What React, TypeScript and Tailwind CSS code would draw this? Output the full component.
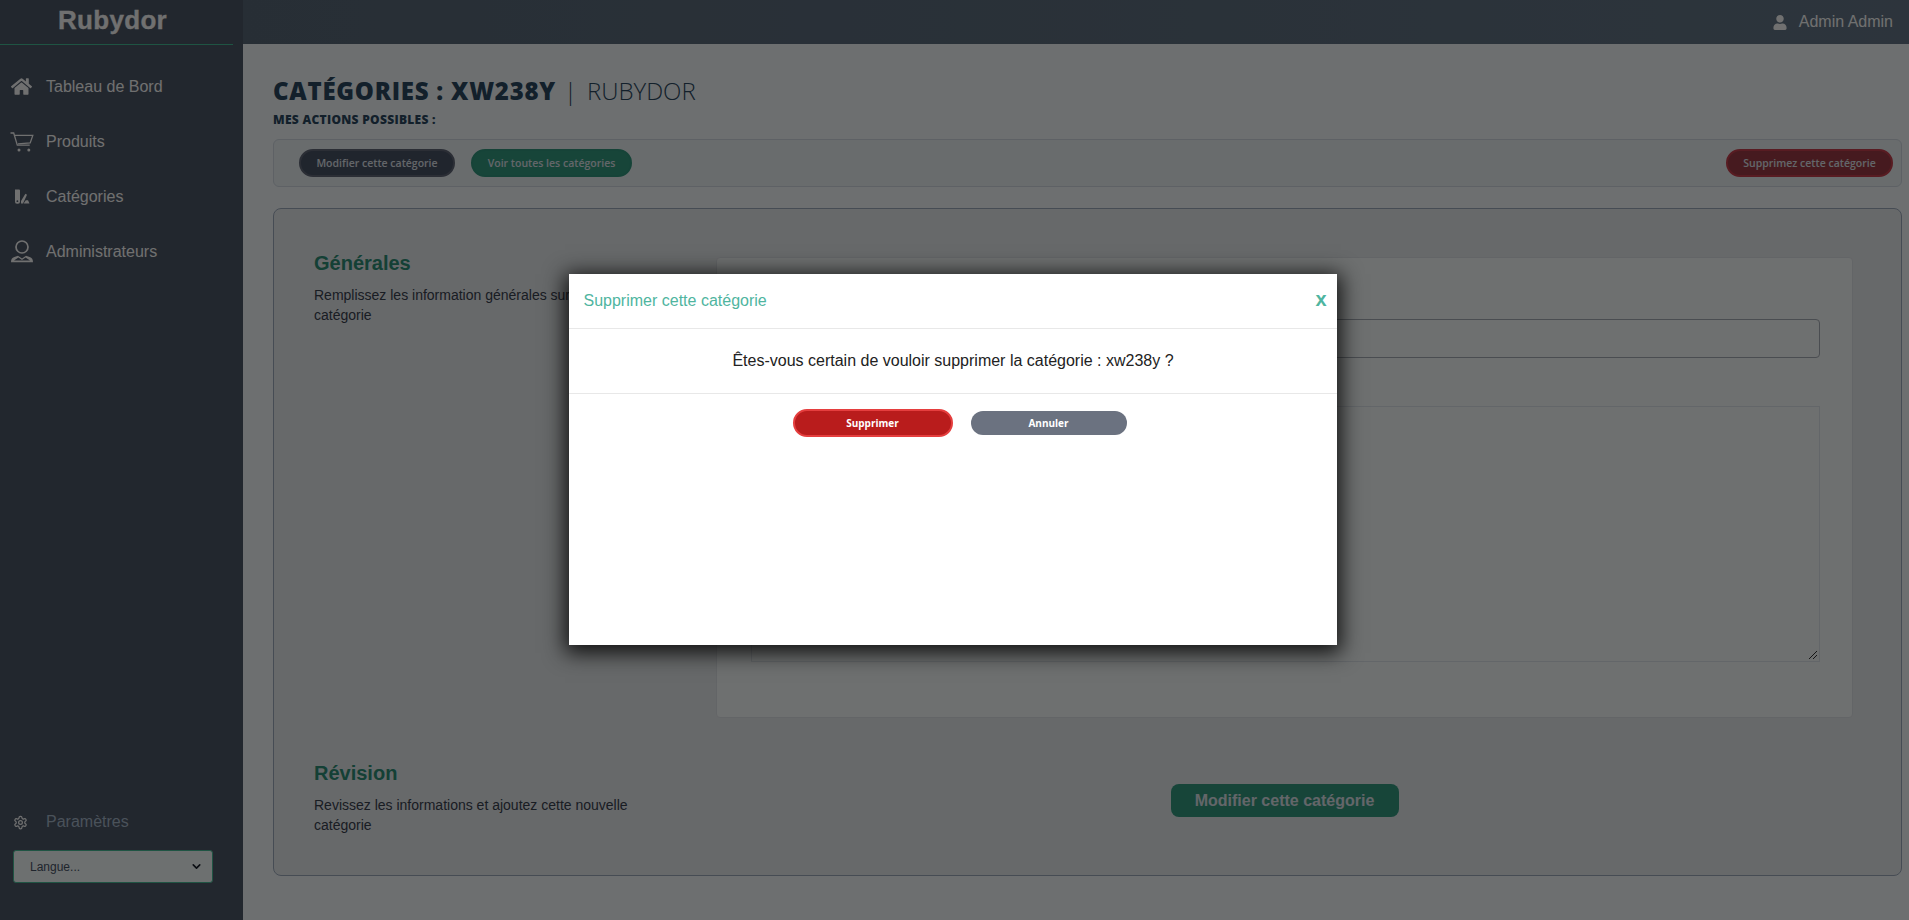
import { FaHome, FaUser } from "react-icons/fa";
import { LuChevronDown, LuSettings } from "react-icons/lu";

const sans = "font-['Liberation_Sans',Arial,sans-serif]";
const open = "font-['Open_Sans',sans-serif]";

function CartIcon() {
  return (
    <svg viewBox="0 0 24 20" className="h-[20px] w-[24px]" fill="none" stroke="currentColor" strokeWidth="1.3">
      <path d="M0.5 1h3.2l3.6 12.2h12.4" />
      <path d="M4.6 3.4h18.2l-2.6 7.6-12.2 0.8" />
      <circle cx="9" cy="18" r="1.5" fill="currentColor" stroke="none" />
      <circle cx="18.8" cy="18" r="1.5" fill="currentColor" stroke="none" />
    </svg>
  );
}

function SwatchIcon() {
  return (
    <svg viewBox="0 0 16 15" className="h-[15px] w-[16px]" fill="currentColor">
      <path d="M1 0.5h4a1 1 0 0 1 1 1v11.2a2 2 0 0 1-2 2H3a2 2 0 0 1-2-2.2z" />
      <path d="M7 12l4.4-7.2 1.6 1L9 14.5H7z" />
      <path d="M9.6 14.6l2.2-3.4h2.2l1.5 3.4z" />
      <circle cx="3.4" cy="12.2" r="0.9" fill="#4e5969" />
    </svg>
  );
}

function AdminIcon() {
  return (
    <svg viewBox="0 0 24 23" className="h-[23px] w-[24px]" fill="none" stroke="currentColor" strokeWidth="1.7">
      <circle cx="12" cy="7" r="6" />
      <path d="M1 22.2c0-2.8 1-4.4 3.4-5.2l3.6-1.2 4 2.8 4-2.8 3.6 1.2c2.4.8 3.4 2.4 3.4 5.2z" fill="currentColor" stroke="none" />
      <path d="M4 20.6l4.4-3 3.6 2.4 3.6-2.4 4.4 3z" fill="#4e5969" stroke="none" />
    </svg>
  );
}

const navItems = [
  { label: "Tableau de Bord", icon: <FaHome className="h-[21px] w-[21px]" /> },
  { label: "Produits", icon: <CartIcon /> },
  { label: "Catégories", icon: <SwatchIcon /> },
  { label: "Administrateurs", icon: <AdminIcon /> },
];

function Sidebar() {
  return (
    <aside className="flex h-[920px] w-[243px] shrink-0 flex-col bg-[#4e5969]">
      <div className="mr-[10px] flex h-[45px] items-center justify-center border-b border-[#48c09a] pb-[4px] pr-[8px]">
        <span className={`${sans} text-[26px] font-bold tracking-[0.3px] text-white [-webkit-text-stroke:0.3px_#ffffff]`}>Rubydor</span>
      </div>
      <nav className="mt-[14px] flex flex-col">
        {navItems.map((item) => (
          <div key={item.label} className="flex h-[55px] items-center text-[16px] text-white">
            <span className="flex w-[46px] justify-center pr-[3px] text-white">{item.icon}</span>
            <span className={sans}>{item.label}</span>
          </div>
        ))}
      </nav>
      <div className="mt-auto pb-[37px]">
        <div className={`${sans} flex h-[30px] translate-y-[2px] items-center text-[16px] text-[#a9bacd]`}>
          <span className="flex w-[46px] justify-center pr-[6px] text-white">
            <LuSettings className="h-[15px] w-[15px]" />
          </span>
          Paramètres
        </div>
        <div className={`${sans} mx-[13px] mt-[15px] flex h-[33px] w-[200px] items-center justify-between rounded-[3px] border border-[#48c09a] bg-[#f8ffff] pl-[16px] pr-[9px] text-[12px] text-[#4a5568]`}>
          Langue...
          <LuChevronDown className="h-[13px] w-[13px] text-[#1a202c]" strokeWidth={3} />
        </div>
      </div>
    </aside>
  );
}

function SectionIntro({ title, text, className }: { title: string; text: string; className: string }) {
  return (
    <div className={`${sans} w-[359px] shrink-0 ${className}`}>
      <h2 className="text-[20px] font-bold leading-[24px] text-[#2f917a]">{title}</h2>
      <p className="mt-[10px] w-[340px] text-[14px] leading-[20px] text-[#3a4350]">{text}</p>
    </div>
  );
}

function Content() {
  return (
    <main className="flex h-[920px] flex-1 flex-col">
      <header className={`${sans} flex h-[44px] items-center justify-end bg-gradient-to-r from-[#5a6a7a] to-[#667889] pr-[16px] text-[16px] text-white`}>
        <FaUser className="mr-[12px] h-[15px] w-[14px]" />
        Admin Admin
      </header>
      <div className="flex-1 pl-[30px] pr-[7px]">
        <h1 className={`${open} mt-[29px] text-[24px] leading-[36px] text-[#2d4a63]`}>
          <span className="font-extrabold tracking-[0.75px]">CATÉGORIES : XW238Y</span>
          <span className="ml-[8px] mr-[10px] font-light">|</span>
          <span className="font-light">RUBYDOR</span>
        </h1>
        <p className={`${open} mt-[3px] text-[12px] font-extrabold leading-[16px] tracking-[0.3px] text-[#2d4a63]`}>MES ACTIONS POSSIBLES :</p>
        <div className={`${open} mt-[11px] flex h-[48px] items-center rounded-[6px] border border-[#d5dde5] bg-[#eff5f9] pl-[25px] pr-[8px] text-[10.5px] font-semibold`}>
          <button className="h-[28px] w-[156px] rounded-full border-2 border-[#636a7a] bg-[#4a5468] pt-[1px] text-[#e2e8f0]">Modifier cette catégorie</button>
          <button className="ml-[16px] h-[28px] w-[161px] rounded-full border-2 border-[#349a7f] bg-[#359d83] pt-[1px] text-[#e2e8f0]">Voir toutes les catégories</button>
          <button className="ml-auto h-[28px] w-[167px] rounded-full border-2 border-[#c9404e] bg-[#a03d47] pt-[1px] text-[#e2e8f0]">Supprimez cette catégorie</button>
        </div>
        <section className="mt-[21px] h-[668px] rounded-[8px] border border-[#a0aec0] bg-[#ebeef2] pl-[40px] pr-[48px] pt-[48px]">
          <div className="flex">
            <SectionIntro className="-mt-[6px]" title="Générales" text="Remplissez les information générales sur cette catégorie" />
            <div className={`${sans} ml-[43px] h-[461px] flex-1 rounded-[4px] border border-[#e2e6ea] bg-[#fbffff] pl-[34px] pr-[32px] pt-[33px] text-[14px] text-[#4a5568]`}>
              <label className="block h-[20px]">Nom</label>
              <div className="mt-[8px] h-[39px] rounded-[4px] border border-[#a9b0b8]" />
              <label className="mt-[28px] block h-[20px]">Description</label>
              <div className="relative h-[256px] border border-[#e2e8f0]">
                <svg viewBox="0 0 10 10" className="absolute bottom-[1px] right-[1px] h-[10px] w-[10px]" stroke="#333" strokeWidth="1">
                  <path d="M1 9L9 1M5 9L9 5" />
                </svg>
              </div>
            </div>
          </div>
          <div className="mt-[43px] flex">
            <SectionIntro className="" title="Révision" text="Revissez les informations et ajoutez cette nouvelle catégorie" />
            <div className="ml-[43px] flex flex-1 justify-center pt-[23px]">
              <button className={`${sans} h-[33px] w-[228px] rounded-[8px] bg-[#359d83] text-[16px] font-bold text-[#e2e8f0]`}>Modifier cette catégorie</button>
            </div>
          </div>
        </section>
      </div>
    </main>
  );
}

function DeleteModal() {
  return (
    <div className="absolute inset-0 flex items-start justify-center bg-[rgba(0,0,0,0.56)]">
      <div className={`${sans} ml-[-4px] mt-[274px] h-[371px] w-[768px] bg-white shadow-[0_4px_20px_4px_rgba(0,0,0,0.85)]`}>
        <div className="flex h-[55px] items-center justify-between border-b border-[#e8e8e8] pl-[15px] pr-[10px]">
          <span className="text-[16px] text-[#4fb5a0]">Supprimer cette catégorie</span>
          <span className="-mt-[4px] text-[20px] font-bold text-[#4fb5a0]">x</span>
        </div>
        <div className="flex h-[65px] items-center justify-center border-b border-[#e8e8e8] pl-[1px] text-[16px] text-[#222222]">
          Êtes-vous certain de vouloir supprimer la catégorie : xw238y ?
        </div>
        <div className={`${open} flex items-center justify-center pl-[14px] pt-[15px] text-[10px] font-bold text-white`}>
          <button className="h-[28px] w-[160px] rounded-full border-2 border-[#e53e3e] bg-[#b91c1c]">Supprimer</button>
          <button className="ml-[18px] h-[24px] w-[156px] rounded-full bg-[#6b7280]">Annuler</button>
        </div>
      </div>
    </div>
  );
}

export default function App() {
  return (
    <div className="relative flex h-[920px] w-[1909px] overflow-hidden bg-[#f8fdff]">
      <Sidebar />
      <Content />
      <DeleteModal />
    </div>
  );
}
